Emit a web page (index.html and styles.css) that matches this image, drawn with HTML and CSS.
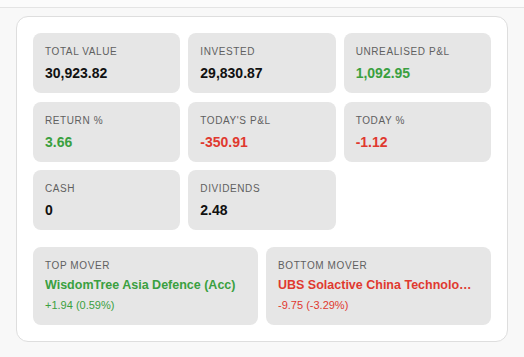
FILE: index.html
```html
<!DOCTYPE html>
<html>
<head>
<meta charset="utf-8">
<title>Portfolio summary</title>
<link rel="stylesheet" href="styles.css">
</head>
<body>

<div class="topbar"></div>

<div class="page">
<div class="card">
	<div class="stats">
		<div class="tile">
			<div class="label">Total Value</div>
			<div class="value">30,923.82</div>
		</div>
		<div class="tile">
			<div class="label">Invested</div>
			<div class="value">29,830.87</div>
		</div>
		<div class="tile">
			<div class="label">Unrealised P&amp;L</div>
			<div class="value up">1,092.95</div>
		</div>
		<div class="tile">
			<div class="label">Return %</div>
			<div class="value up">3.66</div>
		</div>
		<div class="tile">
			<div class="label">Today's P&amp;L</div>
			<div class="value down">-350.91</div>
		</div>
		<div class="tile">
			<div class="label">Today %</div>
			<div class="value down">-1.12</div>
		</div>
		<div class="tile">
			<div class="label">Cash</div>
			<div class="value">0</div>
		</div>
		<div class="tile">
			<div class="label">Dividends</div>
			<div class="value">2.48</div>
		</div>
	</div>

	<div class="movers">
		<div class="tile mover">
			<div class="label">Top Mover</div>
			<div class="name up">WisdomTree Asia Defence (Acc)</div>
			<div class="change up">+1.94 (0.59%)</div>
		</div>
		<div class="tile mover">
			<div class="label">Bottom Mover</div>
			<div class="name down">UBS Solactive China Technology UCITS ETF</div>
			<div class="change down">-9.75 (-3.29%)</div>
		</div>
	</div>
</div>
</div>

</body>
</html>
```

FILE: styles.css
```css
html, body {
	margin: 0;
	padding: 0;
}
body {
	background: #f8f8f8;
	font-family: "Liberation Sans", Arial, sans-serif;
	color: #111;
}
.topbar {
	height: 7px;
	background: #fbfbfb;
	border-bottom: 1px solid #e4e4e4;
}
.page {
	padding: 8px 16px 16px 16px;
}
.card {
	background: #fff;
	border: 1px solid #dedede;
	border-radius: 12px;
	padding: 16px;
}
.stats {
	display: grid;
	grid-template-columns: repeat(3, 1fr);
	gap: 8.5px 8px;
}
.movers {
	display: grid;
	grid-template-columns: repeat(2, 1fr);
	gap: 8px;
	margin-top: 17px;
}
.tile {
	background: #e6e6e6;
	border-radius: 8px;
	padding: 12px;
	min-width: 0;
}
.label {
	font-size: 10px;
	line-height: 14px;
	letter-spacing: 0.06em;
	text-transform: uppercase;
	color: #606060;
}
.value {
	margin-top: 6px;
	font-size: 14px;
	font-weight: bold;
	line-height: 16px;
}
.name {
	margin-top: 4px;
	font-size: 12.5px;
	font-weight: bold;
	line-height: 16px;
	white-space: nowrap;
	overflow: hidden;
	text-overflow: ellipsis;
}
.change {
	margin-top: 6px;
	font-size: 11px;
	line-height: 13px;
}
.mover {
	padding-bottom: 13px;
}
.up {
	color: #3aa040;
}
.down {
	color: #e0392f;
}
```
